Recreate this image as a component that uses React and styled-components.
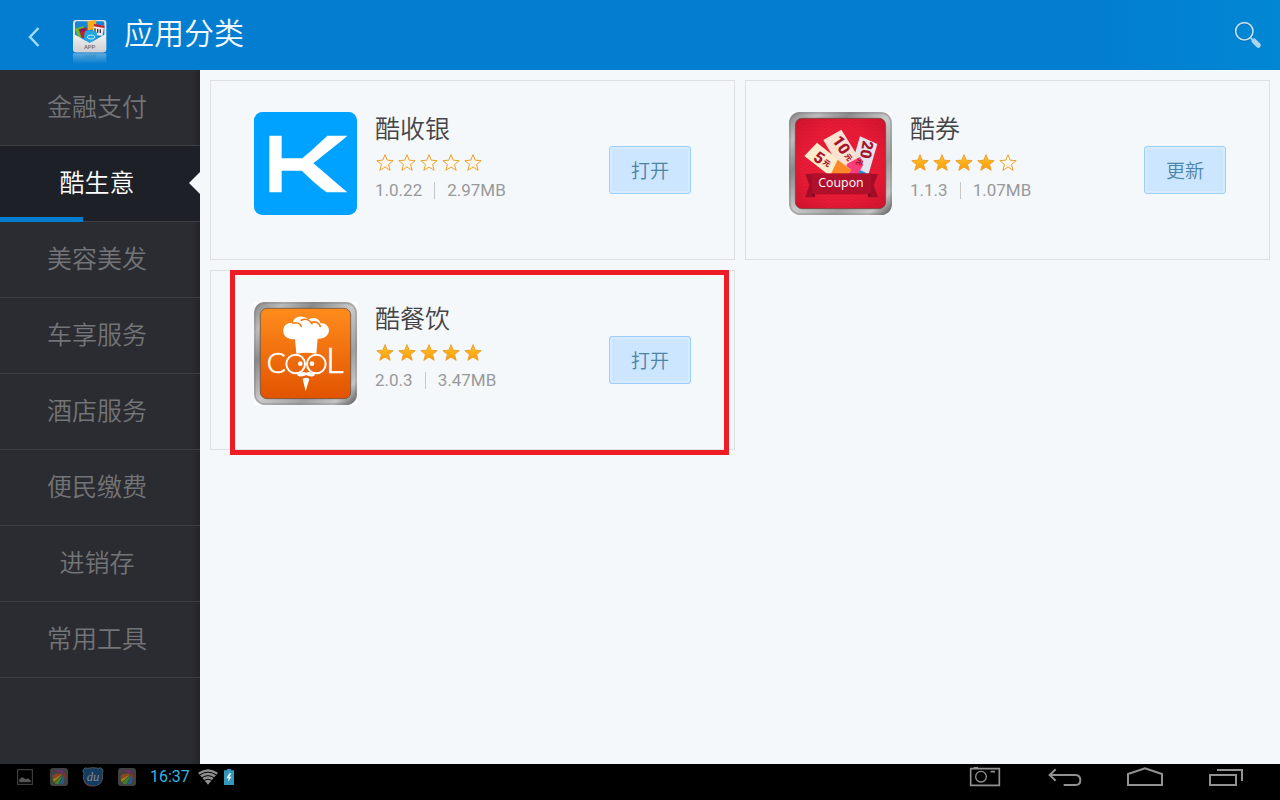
import React from "react";
import styled, { createGlobalStyle } from "styled-components";

const GlobalStyle = createGlobalStyle`
  * { box-sizing: border-box; }
  body {
    margin: 0;
    background: #f4f8fb;
    font-family: Roboto, "Noto Sans CJK SC", sans-serif;
  }
  button { border: 0; padding: 0; background: none; font: inherit; cursor: pointer; }
  svg { display: block; flex: none; }
`;

const Page = styled.div`
  min-height: 100vh;
  display: flex;
  flex-direction: column;
`;

const Header = styled.header`
  height: 70px;
  flex: none;
  display: flex;
  align-items: center;
  background: linear-gradient(90deg, #027dd0 85%, #0287d4 100%);
`;

const BackButton = styled.button`
  width: 72px;
  height: 70px;
  padding: 3px 4px 0 0;
  display: flex;
  align-items: center;
  justify-content: center;
`;

const HeaderLogo = styled.div`
  padding-top: 14px;
`;

const PageTitle = styled.h1`
  flex: 1;
  margin: 0 0 0 17px;
  padding-bottom: 2px;
  font-size: 30px;
  line-height: 40px;
  font-weight: 350;
  color: #f4faff;
`;

const SearchButton = styled.button`
  width: 64px;
  height: 70px;
  display: flex;
  align-items: center;
  justify-content: center;
`;

const Body = styled.div`
  flex: 1;
  display: flex;
`;

const Sidebar = styled.nav`
  width: 200px;
  flex: none;
  background: linear-gradient(90deg, #2b2c31 96%, #242529 100%);
`;

const Category = styled.button`
  && {
    position: relative;
    display: block;
    width: 100%;
    height: 76px;
    padding: 0 6px 0 0;
    border-bottom: 1px solid #3e3f43;
    font-size: 25px;
    line-height: 36px;
    font-weight: 350;
    color: ${(p) => (p.$active ? "#ffffff" : "#737477")};
    background: ${(p) => (p.$active ? "#1e2028" : "transparent")};
  }
`;

const Progress = styled.span`
  position: absolute;
  left: 0;
  bottom: -1px;
  width: 83px;
  height: 5px;
  background: #027dd0;
`;

const Pointer = styled.span`
  position: absolute;
  right: 0;
  top: 26px;
  border: 11px solid transparent;
  border-left-width: 0;
  border-right-color: #f4f8fb;
`;

const AppGrid = styled.main`
  flex: 1;
  padding: 10px;
  display: grid;
  grid-template-columns: 1fr 1fr;
  grid-auto-rows: 180px;
  gap: 10px;
`;

const Card = styled.article`
  position: relative;
  padding: 31px 43px;
  border: 1px solid #dddfe1;
  display: flex;
  align-items: flex-start;
`;

const Highlight = styled.span`
  position: absolute;
  inset: -1px 5px -6px 19px;
  border: 5px solid #ee1c25;
  pointer-events: none;
`;

const Info = styled.div`
  flex: 1;
  margin-left: 18px;
`;

const AppName = styled.h2`
  margin: 0;
  font-size: 25px;
  line-height: 36px;
  font-weight: 350;
  color: #444444;
`;

const Stars = styled.div`
  display: flex;
  gap: 4px;
  margin: 5px 0 9px 1px;
`;

const Meta = styled.div`
  display: flex;
  align-items: center;
  gap: 12px;
  font-size: 17px;
  line-height: 20px;
  color: #999999;
`;

const Divider = styled.span`
  width: 1px;
  height: 17px;
  background: #c4c6c8;
`;

const ActionButton = styled.button`
  && {
    width: 82px;
    height: 48px;
    margin-top: 34px;
    padding-bottom: 2px;
    border: 1px solid #99cffb;
    border-radius: 3px;
    box-shadow: inset 0 0 0 2px #d6ebff;
    background: #cce6ff;
    font-size: 19px;
    font-weight: 350;
    color: #4c83a8;
  }
`;

const SystemBar = styled.footer`
  height: 36px;
  flex: none;
  padding: 0 15px 10px 8px;
  display: flex;
  align-items: center;
  background: #000000;
`;

const Slot = styled.span`
  width: 34px;
  display: flex;
  justify-content: center;
`;

const Clock = styled.time`
  margin: 0 8px 0 6px;
  font-size: 16px;
  line-height: 24px;
  color: #33b5e5;
`;

const Tray = styled.div`
  flex: 1;
  display: flex;
  gap: 6px;
`;

const NavButton = styled.button`
  width: 80px;
  height: 26px;
  display: flex;
  align-items: center;
  justify-content: center;
`;

function Star({ filled }) {
  return (
    <svg width="18" height="18" viewBox="0 0 54 54">
      <path
        d="M27 5 33.500 21.500 51.500 23 37.500 34.500 42.500 52 27 42 11.500 52 16.500 34.500 2.500 23 20.500 21.500Z"
        fill={filled ? "url(#starFill)" : "#fffaf0"}
        stroke="#eda02e"
        strokeWidth="3"
      />
    </svg>
  );
}

function Defs() {
  return (
    <svg width="0" height="0" style={{ position: "absolute" }} aria-hidden="true">
      <defs>
        <linearGradient id="starFill" x1="0" y1="0" x2="0" y2="1">
          <stop offset="0" stopColor="#ffc426" />
          <stop offset="1" stopColor="#fa9a0c" />
        </linearGradient>
        <linearGradient id="metal" x1="0" y1="0" x2="1" y2="1">
          <stop offset="0" stopColor="#858585" />
          <stop offset=".15" stopColor="#bcbcbc" />
          <stop offset=".3" stopColor="#8a8a8a" />
          <stop offset=".5" stopColor="#c9c9c9" />
          <stop offset=".72" stopColor="#a0a0a0" />
          <stop offset=".88" stopColor="#c4c4c4" />
          <stop offset="1" stopColor="#555555" />
        </linearGradient>
        <linearGradient id="orange" x1="0" y1="0" x2="0" y2="1">
          <stop offset="0" stopColor="#fe8c1c" />
          <stop offset="1" stopColor="#e25300" />
        </linearGradient>
        <radialGradient id="red" r=".7">
          <stop offset="0" stopColor="#f01c37" />
          <stop offset=".6" stopColor="#e81b36" />
          <stop offset="1" stopColor="#cf132c" />
        </radialGradient>
        <pattern id="zigzag" width="18" height="10" patternUnits="userSpaceOnUse">
          <path d="M0 7 9 1 18 7" fill="none" stroke="#b80e27" strokeWidth="2" opacity=".4" />
        </pattern>
        <linearGradient id="envelope" x1="0" y1="0" x2="0" y2="1">
          <stop offset="0" stopColor="#f4f4f6" />
          <stop offset="1" stopColor="#cfcfd4" />
        </linearGradient>
        <linearGradient id="reflection" x1="0" y1="0" x2="0" y2="1">
          <stop offset="0" stopColor="#b9d5ea" stopOpacity=".5" />
          <stop offset="1" stopColor="#b9d5ea" stopOpacity="0" />
        </linearGradient>
      </defs>
    </svg>
  );
}

function CashierIcon() {
  return (
    <svg width="103" height="103" viewBox="0 0 309 309">
      <rect width="309" height="309" rx="25" fill="#00a2ff" />
      <path
        d="M46 71H83V139H145C165 121 190 100 220 71H280C252 96 214 124 178 154C213 183 245 212 280 241H218C192 222 166 198 143 176H83V241H46Z"
        fill="#fff"
      />
    </svg>
  );
}

function MetalFrame({ fill }) {
  return (
    <>
      <rect width="309" height="309" fill="#fbfdfe" />
      <rect width="309" height="309" rx="32" fill="url(#metal)" />
      <rect x="3" y="3" width="303" height="303" rx="30" fill="none" stroke="#777" strokeOpacity=".4" strokeWidth="4" />
      <rect x="19" y="19" width="271" height="271" rx="20" fill={fill} stroke="#5b4b42" strokeOpacity=".7" strokeWidth="3" />
    </>
  );
}

function CouponIcon() {
  return (
    <svg width="103" height="103" viewBox="0 0 309 309">
      <MetalFrame fill="url(#red)" />
      <rect x="21" y="21" width="267" height="267" rx="18" fill="url(#zigzag)" />
      <path d="M213 73 265 96 239 185H180Z" fill="#e4e4ec" />
      <path d="M192 165 231 182 225 190H180Z" fill="#1a8fe8" />
      <path d="M103 84 157 53 221 156 200 190H165Z" fill="#fde0d0" />
      <path d="M174 155 214 134 222 160 205 190H165Z" fill="#fb3d7c" />
      <path d="M46 132 84 92 187 174 172 190H120Z" fill="#feebcb" />
      <path d="M126 186 146 143 187 174 170 190Z" fill="#fb8a26" />
      <g fontFamily="Roboto, 'Noto Sans CJK SC', sans-serif" fontWeight="900" fill="#a5142c">
        <text transform="translate(70 143) rotate(34)" fontSize="48">5</text>
        <text transform="translate(100 154) rotate(34)" fontSize="22">元</text>
        <text transform="translate(128 85) rotate(56)" fontSize="48">10</text>
        <text transform="translate(166 131) rotate(56)" fontSize="22">元</text>
        <text transform="translate(222 84) rotate(100)" fontSize="46">20</text>
        <text transform="translate(208 137) rotate(110)" fontSize="22">元</text>
      </g>
      <path d="M49 186H76V256H49L61 220ZM267 186H238V256H267L254 220Z" fill="#a10d26" />
      <rect x="69" y="184" width="177" height="63" fill="#b0102b" />
      <path d="M69 247 77 256V247ZM246 247 238 256V247Z" fill="#5c0413" />
      <text x="156" y="226" textAnchor="middle" fontFamily="'Open Sans', sans-serif" fontSize="37" fill="#fff">
        Coupon
      </text>
    </svg>
  );
}

function CateringIcon() {
  return (
    <svg width="103" height="103" viewBox="0 0 309 309">
      <MetalFrame fill="url(#orange)" />
      <path
        d="M127 155 123 112C96 112 86 98 88 83C90 68 103 61 116 64C118 48 132 42 145 44C153 44 159 48 163 53C174 43 198 48 199 64C213 61 225 72 225 85C224 101 211 112 191 110L187 155Q156 150 127 155Z"
        fill="#fff"
      />
      <path
        d="M117 64C128 60 138 65 142 73M142 55C153 49 166 53 174 65M174 61C184 57 195 63 199 73"
        fill="none"
        stroke="#f47a12"
        strokeWidth="5"
        strokeLinecap="round"
      />
      <g fill="none" stroke="#fff" strokeWidth="6">
        <circle cx="125" cy="186" r="28" />
        <circle cx="187" cy="186" r="28" />
      </g>
      <g fill="#fff">
        <circle cx="139" cy="185" r="7" />
        <circle cx="174" cy="185" r="7" />
      </g>
      <g fontFamily="Lato, sans-serif" fontWeight="300" fill="#fff" stroke="#fff" strokeWidth="2">
        <text x="38" y="213" fontSize="84">C</text>
        <text x="216" y="212" fontSize="104">L</text>
      </g>
      <path
        d="M156 212C147 207 139 213 128 218C139 228 150 222 156 219C163 222 174 228 184 218C173 213 165 207 156 212ZM146 231Q156 224 166 231L155 268Z"
        fill="#fff"
      />
    </svg>
  );
}

function StoreLogo() {
  return (
    <svg width="35" height="46" viewBox="0 0 105 138">
      <rect x="3" y="3" width="100" height="97" rx="9" fill="#e3e3e8" />
      <rect x="9" y="7" width="88" height="60" rx="5" fill="#1786d6" />
      <path d="M46 7 72 4 74 30 48 34Z" fill="#f5ac18" />
      <path d="M8 29 34 21 44 52 20 56Z" fill="#66bd2b" />
      <path d="M65 17 97 20 91 50 63 48Z" fill="#f1e9e7" />
      <path d="M66 15 98 20 97 27 65 22Z" fill="#c42233" />
      <path d="M69 28V40M77 30V41M85 31V42" stroke="#39343d" strokeWidth="4" />
      <path d="M20 31 43 25 50 58 29 57Z" fill="#b92138" />
      <path d="M25 35 40 32" stroke="#7b1d75" strokeWidth="7" />
      <path d="M4 44 53 72 102 44V91Q102 100 93 100H13Q4 100 4 91Z" fill="url(#envelope)" />
      <path d="M38 40Q40 34 48 34L68 37Q76 39 75 46L73 61 53 72 35 61Z" fill="#24a5df" />
      <ellipse cx="57" cy="54" rx="11" ry="6" fill="none" stroke="#c0ebfa" strokeWidth="3" />
      <text x="53" y="91" textAnchor="middle" fontFamily="Roboto, sans-serif" fontSize="18" fill="#55555b">
        APP
      </text>
      <path d="M3 103H103V135H3Z" fill="url(#reflection)" />
      <path d="M38 118 43 108 48 118M52 118V109H59V114H52M64 118V109H71V114H64" fill="none" stroke="#367ead" strokeWidth="2" opacity=".6" />
    </svg>
  );
}

function SwirlIcon() {
  return (
    <svg width="18" height="18" viewBox="0 0 54 54">
      <rect width="54" height="54" rx="9" fill="#414141" />
      <path d="M13 9Q32 2 42 13L34 16Q26 8 13 9Z" fill="#7b2480" />
      <path d="M43 14Q52 25 47 39Q45 26 38 20Z" fill="#8e2a2d" />
      <path d="M8 24Q14 14 38 17L9 32Z" fill="#93441b" />
      <path d="M8 34 38 18 12 43Z" fill="#a37c14" />
      <path d="M13 45 39 20 25 49Q18 49 13 45Z" fill="#3e8427" />
      <path d="M28 49 40 21Q46 35 40 47Z" fill="#205d8d" />
    </svg>
  );
}

function DuIcon() {
  return (
    <svg width="22" height="20" viewBox="0 0 66 60">
      <path
        d="M4 7Q9 0 17 4Q33 0 49 4Q57 0 62 7Q65 14 60 19Q66 38 53 51Q33 63 13 51Q0 38 6 19Q1 14 4 7Z"
        fill="#143b61"
        stroke="#52565b"
        strokeWidth="3"
      />
      <path d="M8 47Q15 57 27 58" fill="none" stroke="#7a2525" strokeWidth="3" />
      <text x="33" y="41" textAnchor="middle" fontFamily="'Liberation Serif', serif" fontStyle="italic" fontSize="38" fill="#86898c">
        du
      </text>
    </svg>
  );
}

const categories = ["金融支付", "酷生意", "美容美发", "车享服务", "酒店服务", "便民缴费", "进销存", "常用工具"];

const apps = [
  { name: "酷收银", rating: 0, version: "1.0.22", size: "2.97MB", action: "打开", Icon: CashierIcon },
  { name: "酷券", rating: 4, version: "1.1.3", size: "1.07MB", action: "更新", Icon: CouponIcon },
  { name: "酷餐饮", rating: 5, version: "2.0.3", size: "3.47MB", action: "打开", Icon: CateringIcon, highlighted: true },
];

function AppCard({ name, rating, version, size, action, Icon, highlighted }) {
  return (
    <Card>
      <Icon />
      <Info>
        <AppName>{name}</AppName>
        <Stars role="img" aria-label={`${rating} / 5`}>
          {[0, 1, 2, 3, 4].map((i) => (
            <Star key={i} filled={i < rating} />
          ))}
        </Stars>
        <Meta>
          <span>{version}</span>
          <Divider />
          <span>{size}</span>
        </Meta>
      </Info>
      <ActionButton>{action}</ActionButton>
      {highlighted && <Highlight />}
    </Card>
  );
}

export default function App() {
  return (
    <Page>
      <GlobalStyle />
      <Defs />
      <Header>
        <BackButton aria-label="返回">
          <svg width="12" height="20" viewBox="0 0 24 40">
            <path d="M21 2 4 20 21 38" fill="none" stroke="#a3daff" strokeWidth="5" />
          </svg>
        </BackButton>
        <HeaderLogo>
          <StoreLogo />
        </HeaderLogo>
        <PageTitle>应用分类</PageTitle>
        <SearchButton aria-label="搜索">
          <svg width="28" height="28" viewBox="0 0 84 84">
            <circle cx="31" cy="32" r="26" fill="none" stroke="#055f9f" strokeOpacity=".6" strokeWidth="8" />
            <circle cx="31" cy="31" r="26" fill="none" stroke="#bfe0f3" strokeWidth="5" />
            <path d="M49 50 55 56" stroke="#a9d5ef" strokeWidth="5" />
            <path d="M60 60 73 73" stroke="#a9d5ef" strokeWidth="15" strokeLinecap="round" />
          </svg>
        </SearchButton>
      </Header>
      <Body>
        <Sidebar>
          {categories.map((name) => {
            const active = name === "酷生意";
            return (
              <Category key={name} $active={active} aria-current={active ? "page" : undefined}>
                {name}
                {active && <Progress />}
                {active && <Pointer />}
              </Category>
            );
          })}
        </Sidebar>
        <AppGrid>
          {apps.map((app) => (
            <AppCard key={app.name} {...app} />
          ))}
        </AppGrid>
      </Body>
      <SystemBar>
        <Slot>
          <svg width="16" height="16" viewBox="0 0 48 48">
            <rect x="2" y="2" width="44" height="44" fill="none" stroke="#4a4a4a" strokeWidth="3" />
            <path d="M7 40V31L14 25 21 27 26 31 32 28 41 34V40Z" fill="#555" />
          </svg>
        </Slot>
        <Slot><SwirlIcon /></Slot>
        <Slot><DuIcon /></Slot>
        <Slot><SwirlIcon /></Slot>
        <Clock>16:37</Clock>
        <Tray>
          <svg width="20" height="16" viewBox="0 0 60 48">
            <path d="M0 11Q30-10 60 11L30 47Z" fill="#8f8f8f" />
            <path d="M5 18Q30 1 55 18M12 26Q30 14 48 26M19 34Q30 27 41 34" fill="none" stroke="#000" strokeWidth="3" />
          </svg>
          <svg width="10" height="16" viewBox="0 0 30 48">
            <path d="M9 0H21V4H30V48H0V4H9Z" fill="#3397ba" />
            <path d="M16 13 7 28H14L12 38 23 23H16L22 13Z" fill="#e8f7fc" />
          </svg>
        </Tray>
        <NavButton aria-label="截屏">
          <svg width="36" height="20" viewBox="0 0 108 60" fill="none" stroke="#929292">
            <path d="M11 5H97V55H11Z" strokeWidth="5" />
            <path d="M20 1H33M71 14H84" strokeWidth="5" />
            <circle cx="42" cy="29" r="16" strokeWidth="4" />
          </svg>
        </NavButton>
        <NavButton aria-label="返回">
          <svg width="36" height="20" viewBox="0 0 108 60" fill="none" stroke="#929292" strokeWidth="6">
            <path d="M26 7 8 24 26 41M8 24H86Q100 25 100 40Q100 54 86 54H50" />
          </svg>
        </NavButton>
        <NavButton aria-label="主页">
          <svg width="36" height="20" viewBox="0 0 108 60" fill="none" stroke="#929292" strokeWidth="6">
            <path d="M3 54V21L54 4 105 21V54Z" />
          </svg>
        </NavButton>
        <NavButton aria-label="最近任务">
          <svg width="36" height="20" viewBox="0 0 108 60" fill="none" stroke="#929292" strokeWidth="6">
            <path d="M9 24H87V54H9ZM30 9H105V42" />
          </svg>
        </NavButton>
      </SystemBar>
    </Page>
  );
}
